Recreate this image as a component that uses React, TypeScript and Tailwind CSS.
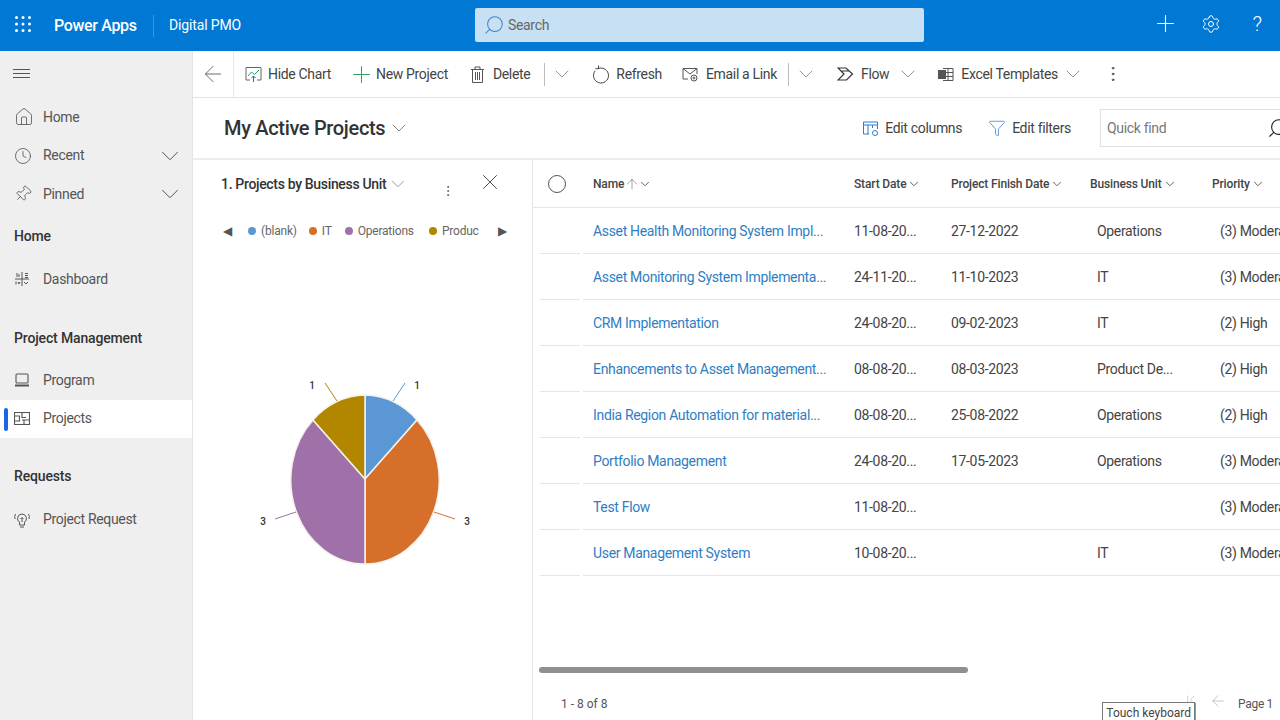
import React from 'react';
import {
  ArrowLeft,
  ArrowUp,
  ChevronDown,
  ChevronFirst,
  Clock,
  Filter,
  Home,
  MoreVertical,
  Pin,
  Plus,
  Search,
  Settings,
  X,
} from 'lucide-react';

const rows = [
  ['Asset Health Monitoring System Impl...', '11-08-20...', '27-12-2022', 'Operations', '(3) Moderate'],
  ['Asset Monitoring System Implementa...', '24-11-20...', '11-10-2023', 'IT', '(3) Moderate'],
  ['CRM Implementation', '24-08-20...', '09-02-2023', 'IT', '(2) High'],
  ['Enhancements to Asset Management...', '08-08-20...', '08-03-2023', 'Product De...', '(2) High'],
  ['India Region Automation for material...', '08-08-20...', '25-08-2022', 'Operations', '(2) High'],
  ['Portfolio Management', '24-08-20...', '17-05-2023', 'Operations', '(3) Moderate'],
  ['Test Flow', '11-08-20...', '', '', '(3) Moderate'],
  ['User Management System', '10-08-20...', '', 'IT', '(3) Moderate'],
];

function Waffle() {
  const dots = [2.5, 9, 15.5];
  return (
    <svg width="18" height="18" viewBox="0 0 18 18" fill="white" className="-mt-[4px]">
      {dots.map((y) => dots.map((x) => <circle key={`${x}-${y}`} cx={x} cy={y} r="1.5" />))}
    </svg>
  );
}

function NavItem({ icon, label, chevron, active }: { icon: React.ReactNode; label: string; chevron?: boolean; active?: boolean }) {
  return (
    <div className={`relative flex items-center h-[38.5px] pl-[14px] pr-[7px] ${active ? 'bg-white' : ''}`}>
      {active && <div className="absolute left-[4px] top-[8px] w-[4px] h-[23px] rounded bg-[#1a66e5]" />}
      <div className="w-[29px] text-[#555] flex items-center">{icon}</div>
      <span className="text-[14px] text-[#555]">{label}</span>
      {chevron && <ChevronDown className="ml-auto text-[#555]" size={30} strokeWidth={0.8} />}
    </div>
  );
}

function SectionTitle({ children, className }: { children: React.ReactNode; className: string }) {
  return <div className={`pl-[14px] text-[14px] leading-[21px] font-medium text-[#333] tracking-[-0.15px] ${className}`}>{children}</div>;
}

function ToolButton({ icon, label, className }: { icon: React.ReactNode; label: string; className: string }) {
  return (
    <div className={`flex items-center gap-[7px] text-[14px] text-[#444] whitespace-nowrap ${className}`}>
      <div className="w-[16px] flex justify-center">{icon}</div>
      <span>{label}</span>
    </div>
  );
}

function Chevron({ className }: { className: string }) {
  return <ChevronDown className={`text-[#666] shrink-0 ${className}`} size={24} strokeWidth={0.7} />;
}

function HeaderCell({ label, children }: { label: string; children?: React.ReactNode }) {
  return (
    <div className="flex items-center gap-[1px] text-[12px] font-medium text-[#444] whitespace-nowrap tracking-[-0.15px]">
      <span>{label}</span>
      {children}
      <ChevronDown size={14} strokeWidth={1.6} className="text-[#555]" />
    </div>
  );
}

function PieChart() {
  return (
    <svg width="260" height="210" viewBox="0 0 260 210" className="block">
      <g stroke="#f4f1ee" strokeWidth="1.5">
        <path d="M130 104 L130 20 A74 84 0 0 1 182 45 Z" fill="#5b97d5" />
        <path d="M130 104 L182 45 A74 84 0 0 1 130 189 Z" fill="#d66f2a" />
        <path d="M130 104 L130 189 A74 84 0 0 1 78 45 Z" fill="#a071a8" />
        <path d="M130 104 L78 45 A74 84 0 0 1 130 20 Z" fill="#b38600" />
      </g>
      <g fill="none" strokeWidth="1">
        <path d="M158 26 L170 8" stroke="#5b97d5" />
        <path d="M102 26 L90 8" stroke="#b38600" />
        <path d="M40 144 L61 137" stroke="#a071a8" />
        <path d="M199 137 L220 144" stroke="#d66f2a" />
      </g>
      <g fontSize="10" fontWeight="500" fill="#333" textAnchor="middle">
        <text x="77" y="14">1</text>
        <text x="182" y="14">1</text>
        <text x="28" y="150">3</text>
        <text x="232" y="150">3</text>
      </g>
    </svg>
  );
}

function LegendItem({ color, label, className }: { color: string; label: string; className: string }) {
  return (
    <div className={`flex items-center gap-[5px] ${className}`}>
      <div className={`w-[8px] h-[8px] rounded-full ${color}`} />
      <span>{label}</span>
    </div>
  );
}

export default function App() {
  return (
    <div className="w-[1280px] h-[720px] overflow-hidden flex flex-col bg-white font-['Roboto','Noto_Sans',sans-serif] tracking-[-0.33px]">
      {/* Top bar */}
      <div className="h-[51px] shrink-0 bg-[#0078d4] flex items-center text-white relative">
        <div className="w-[54px] pl-[14px] flex items-center"><Waffle /></div>
        <span className="text-[16px] font-medium w-[99px]">Power Apps</span>
        <div className="w-px h-[22px] bg-[#3a97dd]" />
        <span className="text-[14px] ml-[15px] tracking-[-0.15px]">Digital PMO</span>
        <div className="absolute left-[475px] top-[8px] w-[449px] h-[34px] bg-[#c7e0f4] rounded-[2px] flex items-center pl-[8px] gap-[3px] text-[#666]">
          <Search size={22} strokeWidth={1.1} className="text-[#3a86c8] -scale-x-100 shrink-0" />
          <span className="text-[14px]">Search</span>
        </div>
        <div className="ml-auto flex items-center">
          <div className="w-[46px] flex justify-center -mt-[4px]"><Plus size={27} strokeWidth={1} className="shrink-0" /></div>
          <div className="w-[46px] flex justify-center -mt-[4px]"><Settings size={20} strokeWidth={1.2} className="shrink-0" /></div>
          <div className="w-[46px] flex justify-center text-[21px] font-light leading-none -mt-[3px]">?</div>
        </div>
      </div>

      <div className="flex-1 flex min-h-0">
        {/* Sidebar */}
        <div className="w-[193px] shrink-0 bg-[#efefef] border-r border-[#e4e4e4]">
          <div className="h-[46px] pl-[13px] flex items-center text-[#555]">
            <svg width="17" height="10" viewBox="0 0 17 10" stroke="currentColor" strokeWidth="1">
              <path d="M0 .5h17M0 4.500h17M0 8.500h17" />
            </svg>
          </div>
          <div className="pt-[1px]">
            <NavItem icon={<Home size={20} strokeWidth={1} />} label="Home" />
            <NavItem icon={<Clock size={18} strokeWidth={1.1} />} label="Recent" chevron />
            <NavItem icon={<Pin size={18} strokeWidth={1.1} className="rotate-45" />} label="Pinned" chevron />
          </div>
          <SectionTitle className="mt-[12px] mb-[13.5px]">Home</SectionTitle>
          <NavItem
            icon={
              <svg width="16" height="16" viewBox="0 0 16 16" fill="none" stroke="currentColor" strokeWidth="1">
                <path d="M8 1v14M1 8h14M3 2v4M5 3v3M11 2.500h3M11 4.500h3M11 6.500h3M2 10.500v3M4 11l1 2 1-2M10 11l2 2 2-2" />
              </svg>
            }
            label="Dashboard"
          />
          <SectionTitle className="mt-[29px] mb-[12.5px]">Project Management</SectionTitle>
          <NavItem
            icon={
              <svg width="16" height="14" viewBox="0 0 16 14" fill="none" stroke="currentColor" strokeWidth="1.1">
                <rect x="2" y="1" width="12" height="9" rx="1" />
                <path d="M1 12.500h14" strokeWidth="2" />
              </svg>
            }
            label="Program"
          />
          <NavItem
            active
            icon={
              <svg width="16" height="13" viewBox="0 0 16 13" fill="none" stroke="currentColor" strokeWidth="1.1">
                <rect x="0.500" y="0.500" width="15" height="12" />
                <path d="M0.500 4h5v5h-5M8 0.500v5h4M8 8h7.500M10 8v4.500" />
              </svg>
            }
            label="Projects"
          />
          <SectionTitle className="mt-[28px] mb-[13.5px]">Requests</SectionTitle>
          <NavItem
            icon={
              <svg width="16" height="18" viewBox="0 0 16 18" fill="none" stroke="currentColor" strokeWidth="1">
                <path d="M8 3a4.500 4.500 0 0 0-2.500 8.200V14h5v-2.800A4.500 4.500 0 0 0 8 3zM6 16h4M8 11V7M6.500 8L8 6.500 9.500 8M1.500 3A6 6 0 0 0 1 8M14.500 3a6 6 0 0 1 .5 5" />
              </svg>
            }
            label="Project Request"
          />
        </div>

        {/* Main */}
        <div className="flex-1 min-w-0 flex flex-col">
          {/* Command bar */}
          <div className="h-[47px] shrink-0 border-b border-[#e2e2e2] flex items-center">
            <div className="w-[41px] h-full border-r border-[#e8e8e8] flex items-center pl-[7px] text-[#555]">
              <ArrowLeft size={26} strokeWidth={0.8} className="shrink-0" />
            </div>
            <ToolButton
              className="ml-[11px]"
              label="Hide Chart"
              icon={
                <svg width="17" height="17" viewBox="0 0 17 17" fill="none" strokeWidth="1" className="shrink-0">
                  <path d="M5 14H1V1.500h15V14h-4" stroke="#666" />
                  <path d="M3 10l3.500-4 3 2.500L14 4" stroke="#2f9e62" />
                  <path d="M8.500 16v-6M6.500 12l2-2 2 2" stroke="#2b6cb0" />
                </svg>
              }
            />
            <ToolButton
              className="ml-[22px]"
              label="New Project"
              icon={<Plus size={27} strokeWidth={0.9} className="text-[#2f9e62] shrink-0" />}
            />
            <ToolButton
              className="ml-[22px]"
              label="Delete"
              icon={
                <svg width="13" height="17" viewBox="0 0 13 17" fill="none" stroke="#555" strokeWidth="1" className="shrink-0">
                  <path d="M0 3.500h13M4 3.500v-2.500h5v2.500M1.500 3.500V16.500h10V3.500M4.500 6v8M6.500 6v8M8.500 6v8" />
                </svg>
              }
            />
            <div className="w-px h-[23px] bg-[#bbb] ml-[14px]" />
            <Chevron className="ml-[5px]" />
            <ToolButton
              className="ml-[19px]"
              label="Refresh"
              icon={
                <svg width="18" height="19" viewBox="0 0 18 19" fill="none" stroke="#444" strokeWidth="1" className="shrink-0">
                  <path d="M6.400 3.500A7.500 7.500 0 1 1 3.200 5.800M6.500 .5V3.700H3.500" />
                </svg>
              }
            />
            <ToolButton
              className="ml-[21px]"
              label="Email a Link"
              icon={
                <svg width="17" height="15" viewBox="0 0 17 15" fill="none" stroke="#555" strokeWidth="1" className="shrink-0">
                  <path d="M6 12H1V1.500h14V7M1 1.500L8 7l7-5.500" />
                  <circle cx="12" cy="11" r="3" />
                  <circle cx="12" cy="11" r="1" />
                </svg>
              }
            />
            <div className="w-px h-[23px] bg-[#bbb] ml-[11px]" />
            <Chevron className="ml-[5px]" />
            <ToolButton
              className="ml-[20px]"
              label="Flow"
              icon={
                <svg width="17" height="14" viewBox="0 0 17 14" fill="none" stroke="#333" strokeWidth="1.2" className="shrink-0">
                  <path d="M1 1h8l6.500 6-6 6H1l6-6zM4 4h8" />
                </svg>
              }
            />
            <Chevron className="ml-[7px]" />
            <ToolButton
              className="ml-[18px]"
              label="Excel Templates"
              icon={
                <svg width="16" height="15" viewBox="0 0 16 15" fill="none" stroke="#555" strokeWidth="1" className="shrink-0">
                  <path d="M5 1.500h10v12H5M10 1.500v12M5 5.500h10M5 9.500h10" />
                  <rect x="0.500" y="3.500" width="7" height="8" fill="#555" />
                </svg>
              }
            />
            <Chevron className="ml-[3px]" />
            <MoreVertical size={20} strokeWidth={1.2} className="ml-[18px] text-[#444]" />
          </div>

          {/* Title row */}
          <div className="h-[62px] shrink-0 border-b-2 border-[#ececec] flex items-center pl-[31px]">
            <span className="text-[20px] font-medium text-[#333]">My Active Projects</span>
            <ChevronDown size={24} strokeWidth={0.7} className="ml-[2px] text-[#555]" />
            <div className="ml-auto flex items-center">
              <ToolButton
                className="mr-[27px]"
                label="Edit columns"
                icon={
                  <svg width="17" height="17" viewBox="0 0 17 17" fill="none" stroke="#2b7cd3" strokeWidth="1" className="shrink-0">
                    <path d="M7 14H1.500V2h14v7M1.500 5h14M6 5v9M10.500 5v3" />
                    <circle cx="13" cy="13" r="2.500" />
                  </svg>
                }
              />
              <ToolButton
                className="mr-[29px]"
                label="Edit filters"
                icon={<Filter size={18} strokeWidth={1} className="text-[#2b7cd3] shrink-0" />}
              />
              <div className="w-[190px] -mr-[10px] h-[38px] border border-[#e0e0e0] flex items-center pl-[6px] text-[14px] text-[#777]">
                Quick find
                <Search size={22} strokeWidth={1.2} className="ml-auto text-[#222] -scale-x-100 shrink-0" />
              </div>
            </div>
          </div>

          {/* Body */}
          <div className="flex-1 min-h-0 flex">
            {/* Chart pane */}
            <div className="w-[340px] shrink-0 border-r border-[#e4e4e4] flex flex-col">
              <div className="h-[47px] pl-[28px] flex items-center">
                <span className="text-[14px] font-medium text-[#333] mt-[1px]">1. Projects by Business Unit</span>
                <ChevronDown size={22} strokeWidth={0.7} className="ml-[1px] text-[#666]" />
                <MoreVertical size={14} strokeWidth={1.2} className="ml-[32px] mt-[14px] text-[#444]" />
                <X size={26} strokeWidth={0.8} className="ml-[22px] -mt-[4px] text-[#333]" />
              </div>
              <div className="mt-[15px] pl-[30px] flex items-center text-[12px] text-[#666] tracking-[-0.2px]">
                <span className="text-[#555] text-[12px] w-[25px]">◀</span>
                <LegendItem color="bg-[#5b97d5]" label="(blank)" className="" />
                <LegendItem color="bg-[#d66f2a]" label="IT" className="ml-[12px]" />
                <LegendItem color="bg-[#a071a8]" label="Operations" className="ml-[13px]" />
                <LegendItem color="bg-[#b38600]" label="Produc" className="ml-[15px]" />
                <span className="text-[#555] text-[12px] ml-[19px]">▶</span>
              </div>
              <div className="mt-[135px] pl-[42px]"><PieChart /></div>
            </div>

            {/* Grid */}
            <div className="flex-1 min-w-0 flex flex-col relative">
              <div className="h-[48px] shrink-0 border-b border-[#e6e6e6] grid grid-cols-[60px_261px_97px_139px_122px_120px] items-center">
                <div className="pl-[15px]"><div className="w-[18px] h-[18px] rounded-full border border-[#555]" /></div>
                <HeaderCell label="Name"><ArrowUp size={16} strokeWidth={0.9} className="text-[#666] -ml-[1px] -mr-[3px]" /></HeaderCell>
                <HeaderCell label="Start Date" />
                <HeaderCell label="Project Finish Date" />
                <HeaderCell label="Business Unit" />
                <HeaderCell label="Priority" />
              </div>
              {rows.map((r) => (
                <div key={r[0]} className="h-[46px] shrink-0 ml-[7px] grid grid-cols-[43px_271px_97px_139px_122px_120px] text-[14px] text-[#444] whitespace-nowrap [&>div]:flex [&>div]:items-center [&>div]:border-b [&>div]:border-[#e6e6e6] [&>div]:pt-[2px]">
                  <div className="mr-[3px]" />
                  <div className="pl-[10px] text-[#2f7ec4]">{r[0]}</div>
                  <div>{r[1]}</div>
                  <div>{r[2]}</div>
                  <div className="pl-[7px]">{r[3]}</div>
                  <div className="pl-[8px]">{r[4]}</div>
                </div>
              ))}
              <div className="mt-auto">
                <div className="ml-[6px] w-[429px] h-[6px] rounded-full bg-[#8f8f8f]" />
                <div className="h-[47px] flex items-center pl-[28px] pt-[14px] text-[12px] text-[#555]">
                  <span className="tracking-normal">1 - 8 of 8</span>
                  <ChevronFirst size={16} strokeWidth={1} className="ml-auto -mt-[8px] text-[#bbb]" />
                  <ArrowLeft size={18} strokeWidth={0.9} className="ml-[10px] mr-[11px] -mt-[6px] text-[#aaa]" />
                  <span className="mr-[7px]">Page 1</span>
                </div>
              </div>
              <div className="absolute right-[85px] top-[542px] h-[22px] px-[3px] pt-[1px] bg-white border border-[#777] shadow-[1px_1px_0_#999] text-[12px] text-[#444] whitespace-nowrap tracking-normal">
                Touch keyboard
              </div>
            </div>
          </div>
        </div>
      </div>
    </div>
  );
}
